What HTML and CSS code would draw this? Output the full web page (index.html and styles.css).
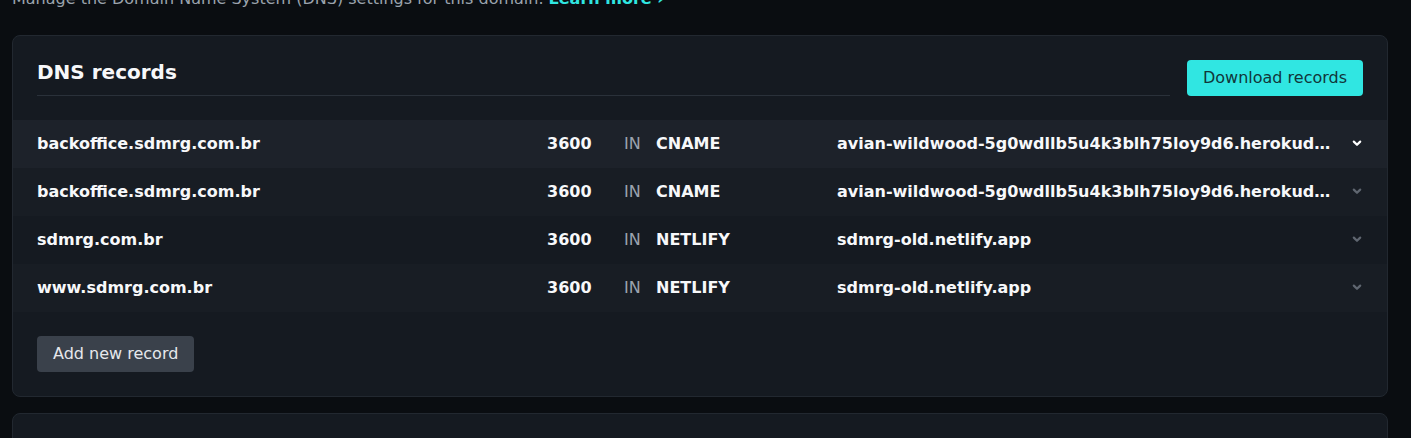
FILE: index.html
```html
<!DOCTYPE html>
<html>
<head>
<meta charset="utf-8">
<link rel="stylesheet" href="styles.css">
</head>
<body>
<div class="page">
  <p class="intro">Manage the Domain Name System (DNS) settings for this domain. <a class="learn" href="#">Learn more ›</a></p>

  <section class="card">
    <div class="card-head">
      <h2 class="title">DNS records</h2>
      <button class="btn btn-primary">Download records</button>
    </div>

    <div class="records">
      <div class="row row-hover">
        <span class="name">backoffice.sdmrg.com.br</span>
        <span class="ttl">3600</span>
        <span class="cls">IN</span>
        <span class="type">CNAME</span>
        <span class="value">avian-wildwood-5g0wdllb5u4k3blh75loy9d6.herokudns.com</span>
        <span class="chev"><svg width="10" height="7" viewBox="0 0 10 7"><path d="M1.8 1.6 L5 4.8 L8.2 1.6" fill="none" stroke="currentColor" stroke-width="2.2" stroke-linecap="round" stroke-linejoin="round"/></svg></span>
      </div>
      <div class="row">
        <span class="name">backoffice.sdmrg.com.br</span>
        <span class="ttl">3600</span>
        <span class="cls">IN</span>
        <span class="type">CNAME</span>
        <span class="value">avian-wildwood-5g0wdllb5u4k3blh75loy9d6.herokudns.com</span>
        <span class="chev"><svg width="10" height="7" viewBox="0 0 10 7"><path d="M1.8 1.6 L5 4.8 L8.2 1.6" fill="none" stroke="currentColor" stroke-width="2.2" stroke-linecap="round" stroke-linejoin="round"/></svg></span>
      </div>
      <div class="row">
        <span class="name">sdmrg.com.br</span>
        <span class="ttl">3600</span>
        <span class="cls">IN</span>
        <span class="type">NETLIFY</span>
        <span class="value">sdmrg-old.netlify.app</span>
        <span class="chev"><svg width="10" height="7" viewBox="0 0 10 7"><path d="M1.8 1.6 L5 4.8 L8.2 1.6" fill="none" stroke="currentColor" stroke-width="2.2" stroke-linecap="round" stroke-linejoin="round"/></svg></span>
      </div>
      <div class="row">
        <span class="name">www.sdmrg.com.br</span>
        <span class="ttl">3600</span>
        <span class="cls">IN</span>
        <span class="type">NETLIFY</span>
        <span class="value">sdmrg-old.netlify.app</span>
        <span class="chev"><svg width="10" height="7" viewBox="0 0 10 7"><path d="M1.8 1.6 L5 4.8 L8.2 1.6" fill="none" stroke="currentColor" stroke-width="2.2" stroke-linecap="round" stroke-linejoin="round"/></svg></span>
      </div>
    </div>

    <div class="card-foot">
      <button class="btn btn-secondary">Add new record</button>
    </div>
  </section>

  <section class="card card-next"></section>
</div>
</body>
</html>
```

FILE: styles.css
```css
* { box-sizing: border-box; }

html, body {
  margin: 0;
  padding: 0;
  background: #0a0d11;
  overflow: hidden;
}

body {
  font-family: "DejaVu Sans", "Noto Sans", sans-serif;
  color: #f3f4f6;
  font-size: 16px;
}

.page {
  margin: 0 23px 0 12px;
}

.intro {
  margin: -13px 0 0;
  height: 48px;
  line-height: 24px;
  color: #9ba3ad;
  font-size: 16px;
}

.learn {
  color: #30e6e2;
  font-weight: bold;
  text-decoration: none;
}

.card {
  background: #151a21;
  border: 1px solid #222830;
  border-radius: 8px;
}

.card-head {
  display: flex;
  align-items: stretch;
  gap: 17px;
  padding: 24px 24px 0;
}

.title {
  flex: 1;
  margin: 0;
  height: 36px;
  font-size: 20px;
  font-weight: bold;
  line-height: 24px;
  color: #f7f8fa;
  border-bottom: 1px solid #2a313a;
}

.btn {
  font-family: "DejaVu Sans", "Noto Sans", sans-serif;
  font-size: 16px;
  height: 36px;
  padding: 0 16px 2px;
  border: 0;
  border-radius: 4px;
  cursor: pointer;
}

.btn-primary {
  background: #30e6e2;
  color: #11363a;
}

.btn-secondary {
  background: #3a414b;
  color: #e6e8eb;
}

.records {
  margin-top: 24px;
}

.row {
  display: grid;
  grid-template-columns: 510px 77px 32px 181px 1fr 28px;
  align-items: center;
  height: 48px;
  padding: 0 24px 2px;
  font-weight: bold;
  color: #f7f8fa;
}

.row:nth-child(even) { background: #181d24; }
.row.row-hover { background: #1d222a; }

.name, .ttl, .type, .value {
  white-space: nowrap;
  overflow: hidden;
}

.cls {
  font-weight: normal;
  color: #9ca3af;
}

.value {
  text-overflow: ellipsis;
  padding-right: 4px;
}

.chev {
  display: flex;
  justify-content: flex-end;
  color: #5f6670;
}

.row-hover .chev { color: #ffffff; }

.chev svg { display: block; margin-right: 1px; }

.card-foot {
  padding: 24px;
}

.card-next {
  margin-top: 16px;
  height: 60px;
}
```
